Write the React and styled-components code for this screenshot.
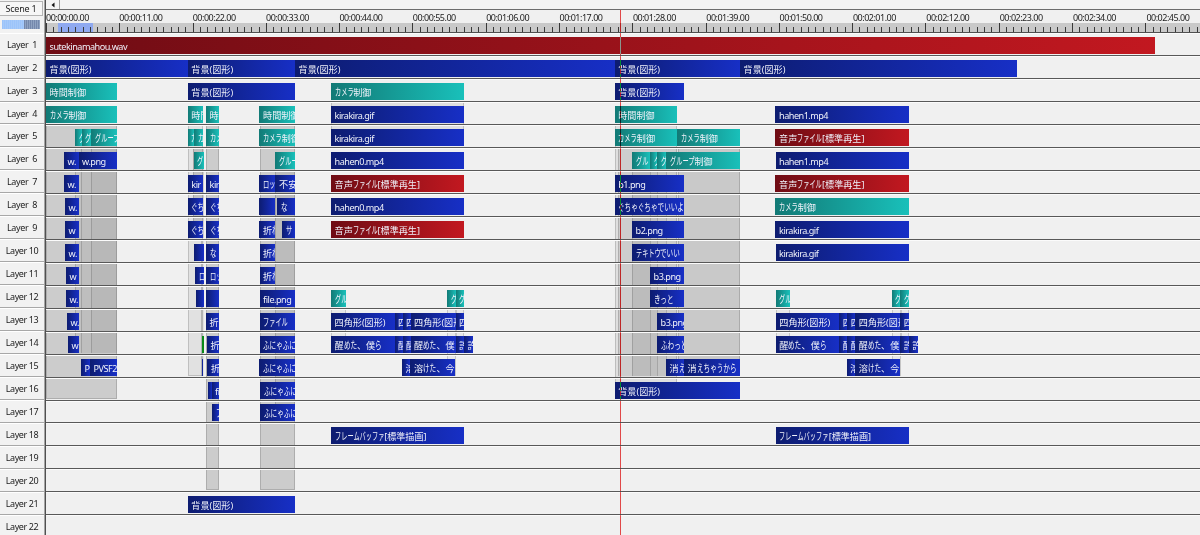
import React from 'react';
import styled, { createGlobalStyle } from 'styled-components';

const GlobalStyle = createGlobalStyle`
  body {
    margin: 0;
    overflow: hidden;
    background: #f0f0f0;
    font-family: "Noto Sans", "Noto Sans CJK JP", sans-serif;
  }
`;

const LEFT = 46;
const ROW = 22.97;
const MAJOR = 73.37;
const PLAYHEAD = 620;
const REPEAT = 444.7;

const Window = styled.div`
  width: 1200px;
  height: 535px;
  display: flex;
  overflow: hidden;
  background: #f0f0f0;
  color: #1c1c1c;
`;

const Sidebar = styled.div`
  width: 45px;
  flex: none;
  box-sizing: border-box;
  border-right: 1px solid #a4a4a4;
  background: #f2f2f2;
`;

const SideHeader = styled.div`
  height: 32.6px;
  box-sizing: border-box;
  padding-top: 1px;
`;

const SceneButton = styled.div`
  width: 43px;
  height: 15px;
  box-sizing: border-box;
  border: 1px solid #b4b4b4;
  border-left: none;
  background: #f6f6f6;
  font-size: 9px;
  line-height: 14px;
  letter-spacing: -0.2px;
  text-align: center;
`;

const ZoomBar = styled.div`
  display: flex;
  width: 38px;
  height: 9px;
  margin: 4px 0 0 2px;
`;

const ZoomPart = styled.div`
  flex: ${(p) => p.$size};
  background: repeating-linear-gradient(90deg, ${(p) => p.$a} 0 1px, ${(p) => p.$b} 1px 2px);
`;

const LayerLabel = styled.div`
  height: ${ROW}px;
  box-sizing: border-box;
  border-top: 1px solid #fff;
  border-bottom: 1px solid #a8a8a8;
  font-size: 9px;
  line-height: 21px;
  letter-spacing: -0.38px;
  text-align: center;
  white-space: pre;
`;

const Main = styled.div`
  flex: 1;
  min-width: 0;
  position: relative;
  border-left: 1px solid #505050;
`;

const ScrollBar = styled.div`
  height: 9px;
  display: flex;
  border-bottom: 1px solid #6c6c6c;
  background: #f3f3f3;
`;

const ScrollArrow = styled.div`
  width: 13px;
  display: flex;
  align-items: center;
  justify-content: center;
  border-right: 1px solid #a0a0a0;
`;

const Times = styled.div`
  height: 13px;
  display: flex;
  overflow: hidden;
`;

const Time = styled.div`
  flex: none;
  width: ${MAJOR}px;
  font-size: 9px;
  line-height: 15px;
  letter-spacing: -0.5px;
`;

const Ruler = styled.div`
  height: 9px;
  display: flex;
  overflow: hidden;
  border-bottom: 1px solid #505050;
  background: linear-gradient(90deg, transparent 12px, #8fa9f0 12px 47px, transparent 47px), #c9c9c9;
`;

const Tick = styled.div`
  flex: none;
  width: ${MAJOR / 10}px;
  height: ${(p) => (p.$major ? 9 : 5)}px;
  box-sizing: border-box;
  align-self: flex-end;
  border-left: 1px solid #383838;
`;

const Tracks = styled.div`
  position: relative;
`;

const Shade = styled.div`
  position: absolute;
  box-sizing: border-box;
  border: 0 solid rgba(0, 0, 0, 0.15);
  border-left-width: 1px;
  border-right-width: ${(p) => (p.$inner ? 0 : 1)}px;
  border-bottom-width: ${(p) => (p.$inner ? 0 : 1)}px;
  background: rgba(0, 0, 0, ${(p) => p.$alpha});
`;

const Track = styled.div`
  position: relative;
  height: ${ROW}px;
  box-sizing: border-box;
  display: flex;
  align-items: flex-end;
  padding-bottom: 1px;
  border-top: 1px solid #fbfbfb;
  border-bottom: 1px solid #585858;
`;

const fills = {
  blue: 'linear-gradient(90deg, #0d1c70, #172fc6)',
  teal: 'linear-gradient(90deg, #127a76, #19c0ba)',
  red: 'linear-gradient(90deg, #6f0c14, #c21820)',
  green: '#0a8a18',
};

const Clip = styled.div`
  flex: none;
  height: 17px;
  box-sizing: border-box;
  padding-left: ${(p) => (p.$empty ? 0 : 3.6)}px;
  overflow: hidden;
  background: ${(p) => fills[p.$kind]};
  color: #f0f2fa;
  font-size: 9.1px;
  line-height: 19px;
  white-space: nowrap;
`;

const Latin = styled.span`
  letter-spacing: -0.5px;
`;

const Kana = styled.span`
  display: inline-block;
  width: ${(p) => p.$width}px;
  height: 17px;
  vertical-align: top;
`;

const Narrow = styled.span`
  display: inline-block;
  font-size: 10.2px;
  transform: scaleX(${(p) => p.$scale});
  transform-origin: left;
`;

const Playhead = styled.div`
  position: absolute;
  top: 10px;
  bottom: 0;
  left: ${PLAYHEAD - LEFT}px;
  width: 1px;
  background: #10a8a8;
  mix-blend-mode: difference;
`;

const BG = '背景(図形)';
const TIME = '時間制御';
const CAM = 'カメラ制御';
const GROUP = 'グループ制御';
const AUDIO = '音声ファイル[標準再生]';
const SHAPE = '四角形(図形)';
const BUFFER = 'フレームバッファ[標準描画]';

const blue = (start, end, text = '') => ({ kind: 'blue', start, end, text });
const teal = (start, end, text = '') => ({ kind: 'teal', start, end, text });
const red = (start, end, text = '') => ({ kind: 'red', start, end, text });
const green = (start, end, text = '') => ({ kind: 'green', start, end, text });

const again = (clips) =>
  clips.map((c) => ({ ...c, start: c.start + REPEAT, end: c.end + REPEAT }));

const smallGroups = [teal(331, 345.5, 'グル'), teal(447, 455.5, 'グ'), teal(455.5, 464, 'グ')];

const shapes = [
  blue(331, 394.5, SHAPE),
  blue(394.5, 402.5, '四'),
  blue(402.5, 410.5, '四'),
  blue(410.5, 455.5, SHAPE),
  blue(455.5, 464, '四'),
];

const lyrics = [
  blue(331, 394.5, '醒めた、僕ら'),
  blue(394.5, 402.5, '醒'),
  blue(402.5, 410.5, '醒'),
  blue(410.5, 455.5, '醒めた、僕ら'),
  blue(455.5, 464, '許'),
  blue(464, 473, '許'),
];

const melted = [blue(402, 410.5, '溶'), blue(410.5, 455.5, '溶けた、今日')];

const layers = [
  [red(46, 1155.3, 'sutekinamahou.wav')],
  [blue(46, 187.7, BG), blue(187.7, 295, BG), blue(295, 614.7, BG), blue(614.7, 740, BG), blue(740, 1017, BG)],
  [teal(46, 117, TIME), blue(187.7, 295, BG), teal(331, 464, CAM), blue(614.7, 684, BG)],
  [
    teal(46, 117, CAM), teal(187.7, 203.5, '時間'), teal(206, 219.3, '時'), teal(259.5, 295, TIME),
    blue(331, 464, 'kirakira.gif'), teal(614.7, 677.5, TIME), blue(775.5, 909, 'hahen1.mp4'),
  ],
  [
    teal(75, 81.7, 'グ'), teal(81.7, 91, 'グ'), teal(91, 117, 'グループ'), teal(187.7, 194, 'カ'),
    teal(194, 203.5, 'カ'), teal(206, 219.3, 'カメ'), teal(259.5, 295, CAM), blue(331, 464, 'kirakira.gif'),
    teal(614.7, 677.5, CAM), teal(677.5, 740, CAM), red(775.5, 909, AUDIO),
  ],
  [
    blue(64, 78.5, 'w.'), blue(78.5, 117, 'w.png'), teal(193.5, 203.5, 'グ'), teal(275, 295, 'グルー'),
    blue(331, 464, 'hahen0.mp4'), teal(632, 650, 'グル'), teal(650, 657, 'グ'), teal(657, 666, 'グ'),
    teal(666, 740, GROUP), blue(775.5, 909, 'hahen1.mp4'),
  ],
  [
    blue(64, 78.5, 'w.'), blue(187.7, 203.5, 'kir'), blue(206, 219.3, 'kir'), blue(259.5, 275.5, 'ロッ'),
    blue(275.5, 295, '不安'), red(331, 464, AUDIO), blue(614.7, 684, 'b1.png'), red(775.5, 909, AUDIO),
  ],
  [
    blue(65, 78.5, 'w.'), blue(187.7, 203.5, 'ぐち'), blue(206, 219.3, 'ぐち'), blue(259.5, 275),
    blue(277, 295, 'な'), blue(331, 464, 'hahen0.mp4'), blue(614.7, 684, 'ぐちゃぐちゃでいいよ'),
    teal(775.5, 909, CAM),
  ],
  [
    blue(65, 78.5, 'w'), blue(187.7, 203.5, 'ぐち'), blue(206, 219.3, 'ぐち'), blue(259.5, 275, '折れ'),
    blue(282, 295, 'サ'), red(331, 464, AUDIO), blue(632, 684, 'b2.png'), blue(775.5, 909, 'kirakira.gif'),
  ],
  [
    blue(65, 78.5, 'w.'), blue(193.5, 203.5), blue(206, 219, 'な'), blue(259.5, 275, '折れ'),
    blue(632, 684, 'テキトウでいい'), blue(775.5, 909, 'kirakira.gif'),
  ],
  [blue(66, 78.5, 'w'), blue(195, 203.5, 'ロ'), blue(206, 219, 'ロッ'), blue(259.5, 275, '折れ'), blue(650, 684, 'b3.png')],
  [
    blue(66, 78.5, 'w.'), blue(196, 203.5), blue(206, 219), blue(259.5, 295, 'file.png'), ...smallGroups,
    blue(650, 684, 'きっと'), ...again(smallGroups),
  ],
  [
    blue(67, 79, 'w.'), blue(206, 219, '折'), blue(259.5, 295, 'ファイル'), ...shapes,
    blue(657, 684, 'b3.png'), ...again(shapes),
  ],
  [
    blue(68, 79, 'w'), green(201.5, 203.5), blue(207, 219, '折'), blue(259.5, 295, 'ふにゃふに'),
    ...lyrics, blue(657, 684, 'ふわっと'), ...again(lyrics),
  ],
  [
    blue(81, 90, 'P'), blue(90, 117, 'PVSF2'), blue(201.8, 203.5), blue(207.5, 219, '折'),
    blue(259.5, 295, 'ふにゃふに'), ...melted, blue(666, 684, '消え'), blue(684, 740, '消えちゃうから'),
    ...again(melted),
  ],
  [blue(207.5, 211.5), blue(211.5, 219.3, 'fi'), blue(260.5, 295, 'ふにゃふに'), blue(614.7, 740, BG)],
  [blue(212, 219.3, 'フ'), blue(260.5, 295, 'ふにゃふに')],
  [blue(331, 464, BUFFER), blue(775.5, 909, BUFFER)],
  [],
  [],
  [blue(187.7, 295, BG)],
  [],
];

// start x, end x, first layer, last layer, darkness, inner
const shades = [
  [46, 117, 5, 16, 0.15],
  [75, 117, 6, 14, 0.05, true],
  [81, 117, 6, 14, 0.01, true],
  [91, 117, 6, 14, 0.03, true],
  [187.7, 203.5, 5, 15, 0.06],
  [193, 203.5, 6, 9, 0.14, true],
  [201, 203.5, 10, 15, 0.06, true],
  [206, 219.3, 5, 20, 0.15],
  [259.5, 295, 5, 20, 0.15],
  [275, 295, 7, 17, 0.08, true],
  [331, 464, 4, 5, 0.07],
  [331, 345.5, 13, 14, 0.03],
  [447, 455.5, 13, 15, 0.03],
  [455.5, 464, 13, 14, 0.03],
  [614.7, 677.5, 5, 16, 0.07],
  [618, 677.5, 6, 15, 0.08, true],
  [677.5, 740, 6, 15, 0.16],
  [632, 650, 7, 15, 0.08, true],
  [650, 657, 7, 15, 0.06, true],
  [657, 666, 7, 15, 0.04, true],
  [666, 677.5, 7, 15, 0.01, true],
  [775.5, 790, 13, 14, 0.03],
  [892, 900.5, 13, 15, 0.03],
  [900.5, 909, 13, 14, 0.03],
];

const seconds = Array.from({ length: 16 }, (_, i) => i * 11);

const formatTime = (s) =>
  `00:${String(Math.floor(s / 60)).padStart(2, '0')}:${String(s % 60).padStart(2, '0')}.00`;

const ClipText = ({ text }) =>
  text
    .split(/([ぁ-ん]+|[ァ-ヶー]+|[a-zA-Z0-9.]+)/)
    .filter(Boolean)
    .map((part, i) => {
      if (/[a-zA-Z0-9.]/.test(part)) return <Latin key={i}>{part}</Latin>;
      if (!/[ぁ-んァ-ヶー]/.test(part)) return <span key={i}>{part}</span>;
      const advance = /[ぁ-ん]/.test(part) ? 6.6 : 6.2;
      return (
        <Kana key={i} $width={part.length * advance}>
          <Narrow $scale={advance / 10.2}>{part}</Narrow>
        </Kana>
      );
    });

const TrackRow = ({ clips }) => (
  <Track>
    {clips.map((clip, i) => {
      const previous = i ? clips[i - 1].end : LEFT;
      return (
        <Clip
          key={i}
          $kind={clip.kind}
          $empty={!clip.text}
          style={{ marginLeft: clip.start - previous, width: clip.end - clip.start }}
        >
          <ClipText text={clip.text} />
        </Clip>
      );
    })}
  </Track>
);

const App = () => {
  return (
    <>
      <GlobalStyle />
      <Window>
        <Sidebar>
          <SideHeader>
            <SceneButton>Scene 1</SceneButton>
            <ZoomBar>
              <ZoomPart $size={22} $a="#9cc4fa" $b="#a6cafa" />
              <ZoomPart $size={16} $a="#7488ac" $b="#8fa3c2" />
            </ZoomBar>
          </SideHeader>
          {layers.map((_, i) => (
            <LayerLabel key={i}>{`Layer ${String(i + 1).padStart(2, ' ')}`}</LayerLabel>
          ))}
        </Sidebar>
        <Main>
          <ScrollBar>
            <ScrollArrow>
              <svg width="4" height="6" viewBox="0 0 4 6">
                <path d="M3.5 0.5v5L0.5 3z" fill="#111" />
              </svg>
            </ScrollArrow>
          </ScrollBar>
          <Times>
            {seconds.map((s) => (
              <Time key={s}>{formatTime(s)}</Time>
            ))}
          </Times>
          <Ruler>
            {Array.from({ length: 158 }, (_, i) => (
              <Tick key={i} $major={i % 10 === 0} />
            ))}
          </Ruler>
          <Tracks>
            {shades.map(([start, end, first, last, alpha, inner], i) => (
              <Shade
                key={i}
                $alpha={alpha}
                $inner={inner}
                style={{
                  left: start - LEFT,
                  width: end - start,
                  top: (first - 1) * ROW,
                  height: (last - first + 1) * ROW - 2,
                }}
              />
            ))}
            {layers.map((clips, i) => (
              <TrackRow key={i} clips={clips} />
            ))}
          </Tracks>
          <Playhead />
        </Main>
      </Window>
    </>
  );
};

export default App;
